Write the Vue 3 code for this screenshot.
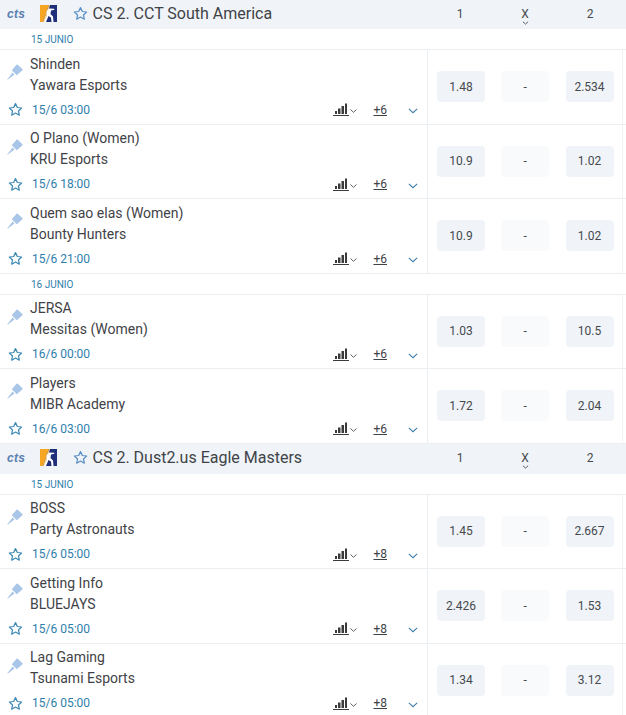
<template>
  <div class="page">
    <section v-for="(league, li) in leagues" :key="league.name">
      <div class="league" :class="{ first: li === 0 }">
        <div class="league-left">
          <span class="cts">cts</span>
          <svg class="cs-logo" viewBox="0 0 17 17">
            <rect width="17" height="17" fill="#1f2f7a" />
            <path d="M0 0H9L3 17H0Z" fill="#f6a623" />
            <path d="M3 17L9 0H10L5 17Z" fill="#fbd58a" />
            <path d="M4 17L7 10L6.500 6.500L9 3.500L14 3.800L14.500 4.800L11 5.500L10.500 9L13 11.500L13.500 17H11.500L11 12.500L8.500 11L6 17Z" fill="#fff" />
          </svg>
          <svg class="star big" viewBox="0 0 24 24"><path :d="starPath" /></svg>
          <span class="league-name">{{ league.name }}</span>
        </div>
        <div class="odds-cols">
          <span>1</span>
          <span class="x-col">X
            <svg class="x-chev" viewBox="0 0 8 4"><path d="M1 .5L4 3.200L7 .5" /></svg>
          </span>
          <span>2</span>
        </div>
      </div>

      <template v-for="day in league.days" :key="day.label">
        <div class="day">{{ day.label }}</div>
        <div v-for="m in day.matches" :key="m.home" class="match">
          <div class="match-left">
            <div class="teams-row">
              <svg class="pin" viewBox="0 0 16 16">
                <path d="M10.500.6L15.500 5.300Q16 6 15.200 6.600L9.800 11.300L4.800 6.200L9.300 .9Q9.900.1 10.500.6Z" fill="#a9c6e8" />
                <path d="M5.500 8.600L7.500 10.500L.6 15.800L.2 15.400Z" fill="#a9c6e8" />
              </svg>
              <div class="teams">
                <div>{{ m.home }}</div>
                <div>{{ m.away }}</div>
              </div>
            </div>
            <div class="meta">
              <svg class="star" viewBox="0 0 24 24"><path :d="starPath" /></svg>
              <span class="time">{{ m.time }}</span>
              <svg class="bars" viewBox="0 0 16 13">
                <path d="M2 8h2v3H2zM5 5.500h2.500V11H5zM8.500 3h2.500v8H8.500zM12 0.500h2V11h-2zM0 12h16v1H0z" fill="#3b3b3b" />
              </svg>
              <svg class="bars-chev" viewBox="0 0 7 4"><path d="M.5.5L3.500 3.300L6.500.5" /></svg>
              <span class="more">+{{ league.more }}</span>
              <svg class="chev" viewBox="0 0 12 7"><path d="M1 1L6 5.600L11 1" /></svg>
            </div>
          </div>
          <div class="match-odds">
            <button class="odd">{{ m.one }}</button>
            <button class="odd empty">-</button>
            <button class="odd">{{ m.two }}</button>
          </div>
        </div>
      </template>
    </section>
  </div>
</template>

<script setup>
const starPath = 'M12 2.500l2.900 6.300 6.900.8-5.100 4.700 1.400 6.800-6.100-3.400-6.100 3.400 1.400-6.800L2.200 9.600l6.900-.8z'

const leagues = [
  {
    name: 'CS 2. CCT South America',
    more: 6,
    days: [
      {
        label: '15 JUNIO',
        matches: [
          { home: 'Shinden', away: 'Yawara Esports', time: '15/6 03:00', one: '1.48', two: '2.534' },
          { home: 'O Plano (Women)', away: 'KRU Esports', time: '15/6 18:00', one: '10.9', two: '1.02' },
          { home: 'Quem sao elas (Women)', away: 'Bounty Hunters', time: '15/6 21:00', one: '10.9', two: '1.02' }
        ]
      },
      {
        label: '16 JUNIO',
        matches: [
          { home: 'JERSA', away: 'Messitas (Women)', time: '16/6 00:00', one: '1.03', two: '10.5' },
          { home: 'Players', away: 'MIBR Academy', time: '16/6 03:00', one: '1.72', two: '2.04' }
        ]
      }
    ]
  },
  {
    name: 'CS 2. Dust2.us Eagle Masters',
    more: 8,
    days: [
      {
        label: '15 JUNIO',
        matches: [
          { home: 'BOSS', away: 'Party Astronauts', time: '15/6 05:00', one: '1.45', two: '2.667' },
          { home: 'Getting Info', away: 'BLUEJAYS', time: '15/6 05:00', one: '2.426', two: '1.53' },
          { home: 'Lag Gaming', away: 'Tsunami Esports', time: '15/6 05:00', one: '1.34', two: '3.12' }
        ]
      }
    ]
  }
]
</script>

<style>
html,
body {
  margin: 0;
  overflow: hidden;
  background: #fff;
}
</style>

<style scoped>
.page {
  width: 626px;
  font-family: Roboto, "Liberation Sans", sans-serif;
  color: #3a3f44;
}

.league {
  height: 30px;
  box-sizing: border-box;
  padding-bottom: 2px;
  display: flex;
  background: #f0f4f8;
}

.league.first {
  height: 29px;
}

.league-left {
  width: 428px;
  display: flex;
  align-items: center;
}

.cts {
  width: 40px;
  padding-left: 7px;
  box-sizing: border-box;
  font-family: "Liberation Sans", sans-serif;
  font-size: 12px;
  font-weight: 700;
  font-style: italic;
  letter-spacing: 0.3px;
  color: #5a7fb0;
}

.cs-logo {
  width: 17px;
  height: 17px;
  margin-right: 16px;
}

.star {
  width: 15px;
  height: 15px;
  flex: none;
  fill: none;
  stroke: #3f8ab5;
  stroke-width: 2;
  stroke-linejoin: round;
}

.star.big {
  width: 15px;
  height: 15px;
  margin: 0 5px 0 -0.500px;
  stroke: #5b8fc4;
}

.league-name {
  font-size: 16px;
  color: #3f4347;
}

.odds-cols {
  display: flex;
  padding-left: 8px;
  gap: 17px;
  font-size: 12px;
  color: #45494d;
  align-items: center;
}

.odds-cols span {
  width: 48px;
  text-align: center;
}

.x-col {
  position: relative;
}

.x-chev {
  position: absolute;
  left: 20.500px;
  top: 14px;
  width: 7px;
  height: 4px;
  fill: none;
  stroke: #45494d;
}

.day {
  height: 21px;
  line-height: 21px;
  padding-left: 31px;
  font-size: 10px;
  color: #2f7eab;
  border-bottom: 1px solid #eceff2;
  box-sizing: border-box;
}

.match {
  height: 74.500px;
  box-sizing: border-box;
  display: flex;
  border-bottom: 1px solid #eceff2;
}

.match-left {
  width: 428px;
  box-sizing: border-box;
  border-right: 1px solid #eceff2;
  padding-top: 3.750px;
}

.teams-row {
  display: flex;
  align-items: center;
}

.pin {
  width: 16px;
  height: 16px;
  margin: -5px 7px 0 7px;
  flex: none;
}

.teams {
  font-size: 14px;
  line-height: 21px;
  color: #3f4347;
}

.meta {
  display: flex;
  align-items: center;
  height: 20px;
  margin-top: 3.750px;
  padding-left: 8px;
}

.time {
  margin-left: 9px;
  font-size: 12px;
  color: #2f7eab;
}

.bars {
  width: 16px;
  height: 13px;
  margin-left: auto;
}

.bars-chev {
  width: 7px;
  height: 4px;
  margin: 3px 0 0 1px;
  fill: none;
  stroke: #5c6166;
}

.more {
  margin-left: 16px;
  font-size: 12px;
  text-decoration: underline;
  color: #3f4347;
}

.chev {
  width: 10px;
  height: 6px;
  margin: 3px 9px 0 21px;
  fill: none;
  stroke: #3f7ea8;
  stroke-width: 1.300;
}

.match-odds {
  flex: 1;
  display: flex;
  align-items: center;
  gap: 16.250px;
  padding-left: 9px;
  position: relative;
}

.odd {
  width: 48px;
  height: 31px;
  padding: 0;
  border: 0;
  border-radius: 4px;
  background: #f0f4f8;
  font: 12px Roboto, "Liberation Sans", sans-serif;
  color: #45494d;
}

.odd.empty {
  background: #f8fafb;
}

.match-odds::after {
  content: "";
  position: absolute;
  right: 3px;
  top: 0;
  bottom: 0;
  width: 1px;
  background: #f1f3f5;
}
</style>
